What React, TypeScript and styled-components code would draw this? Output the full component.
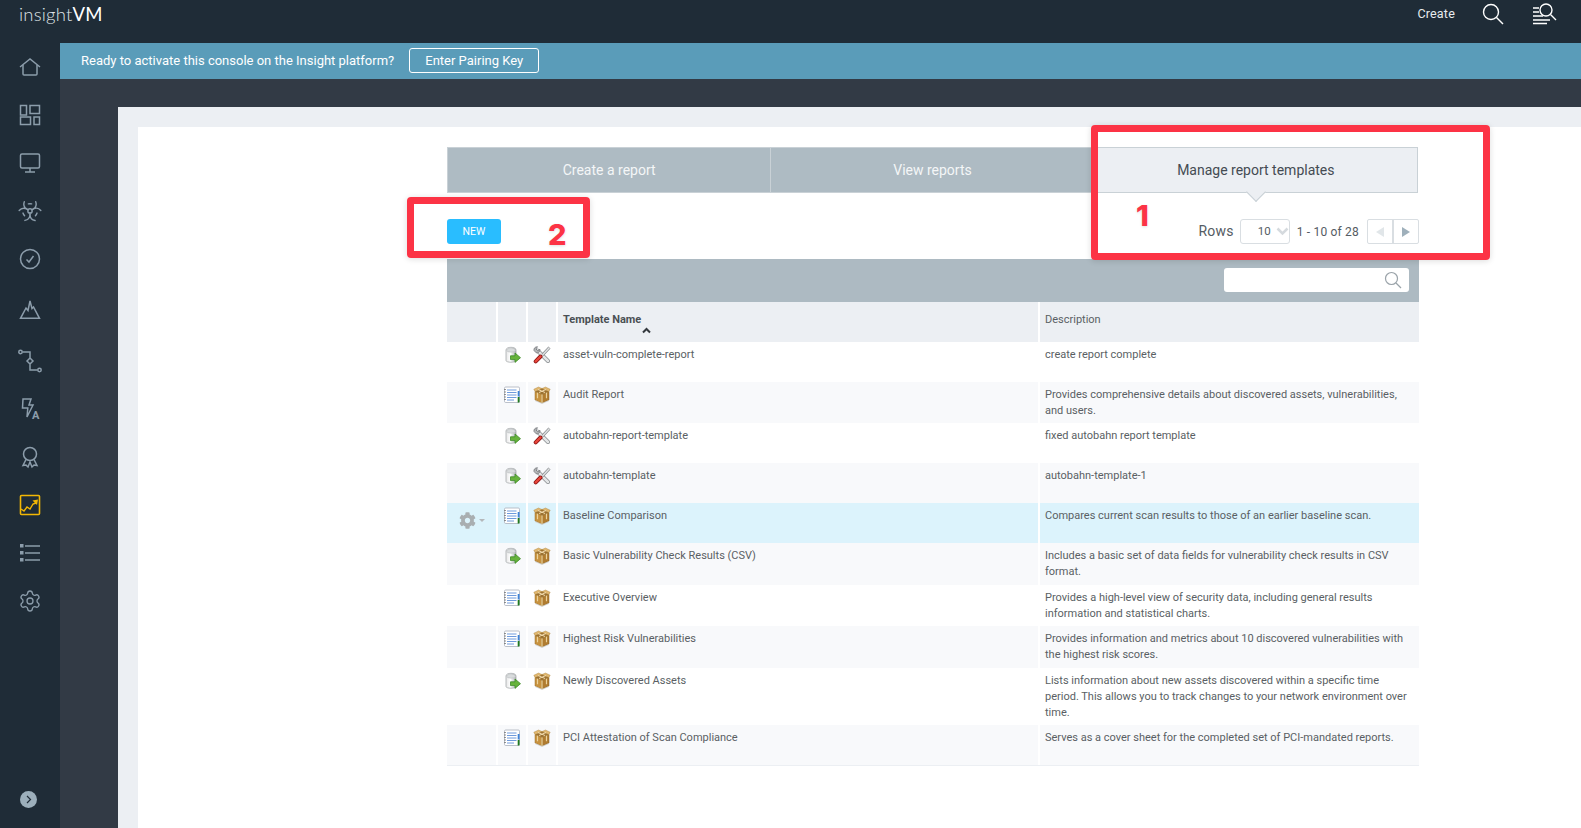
import styled, { createGlobalStyle } from 'styled-components';
import { Biohazard, Settings } from 'lucide-react';
import { FaCog } from 'react-icons/fa';

const GlobalStyle = createGlobalStyle`
	* { box-sizing: border-box; }
	html, body, #root { margin: 0; height: 100%; }
	body {
		font-family: Roboto, "Liberation Sans", sans-serif;
		overflow: hidden;
		background: #fff;
	}
`;

const Shell = styled.div`
	display: grid;
	grid-template-columns: 60px 1fr;
	grid-template-rows: 43px 1fr;
	height: 828px;
	background: #1f2c37;
`;
const TopBar = styled.header`
	grid-column: 1 / 3;
	display: flex;
	align-items: center;
	padding: 0 24px 16px 19px;
	color: #fff;
`;
const Logo = styled.div`
	font-family: Lato, sans-serif;
	font-size: 18.5px;
	font-weight: 300;
	color: #dfe4e8;
	letter-spacing: 0.2px;
	flex: 1;
	> b {
		font-weight: 400;
		color: #fff;
	}
`;
const TopAction = styled.span`
	font-size: 12.5px;
	letter-spacing: 0.2px;
	margin-right: 27px;
	color: #e8ecef;
`;
const TopIcon = styled.svg`
	display: block;
	color: #fff;
`;
const TopIconGap = styled.span`
	width: 28px;
`;
const SideNav = styled.nav`
	display: flex;
	flex-direction: column;
	color: #8c9dab;
`;
const NavItem = styled.a<{ $active?: boolean; $shift?: boolean }>`
	height: 48px;
	display: flex;
	align-items: center;
	justify-content: center;
	flex: none;
	color: ${(p) => (p.$active ? '#f2b705' : 'inherit')};
	margin-top: ${(p) => (p.$shift ? '6px' : '0')};
`;
const NavToggle = styled.button`
	margin: auto 0 20px 20px;
	width: 17px;
	height: 17px;
	border-radius: 50%;
	border: 0;
	padding: 0;
	background: #9cafbb;
	display: flex;
	align-items: center;
	justify-content: center;
	color: #1f2c37;
`;
const Main = styled.main`
	display: flex;
	flex-direction: column;
	background: #323a45;
	min-width: 0;
`;
const Banner = styled.div`
	height: 36px;
	flex: none;
	display: flex;
	align-items: center;
	gap: 15px;
	padding: 0 0 1px 21px;
	background: #5a9cb9;
	color: #fff;
	font-size: 13px;
`;
const PairingButton = styled.button`
	height: 25px;
	width: 130px;
	padding: 0;
	border: 1px solid #fff;
	border-radius: 3px;
	background: transparent;
	color: #fff;
	font: inherit;
`;
const Frame = styled.div`
	flex: 1;
	display: flex;
	margin: 28px 0 0 58px;
	padding: 20px 0 0 20px;
	background: #eceff3;
	min-height: 0;
`;
const Page = styled.div`
	flex: 1;
	background: #fff;
	padding: 20px 0 0 309px;
`;
const Board = styled.div`
	position: relative;
	width: 972px;
`;
const Tabs = styled.div`
	display: flex;
	width: 971px;
	height: 46px;
`;
const Tab = styled.div<{ $active?: boolean }>`
	flex: 1;
	position: relative;
	display: flex;
	align-items: center;
	justify-content: center;
	font-size: 14px;
	border: 1px solid #c9d1d6;
	border-left-width: 0;
	background: ${(p) => (p.$active ? '#eceff3' : '#aebbc3')};
	color: ${(p) => (p.$active ? '#444b52' : '#f4f6f7')};
	&:first-child {
		border-left-width: 1px;
	}
	${(p) =>
		p.$active &&
		`&::after {
		content: '';
		position: absolute;
		left: 50%;
		bottom: -7px;
		width: 13px;
		height: 13px;
		margin-left: -7px;
		background: #eceff3;
		border-right: 1px solid #c9d1d6;
		border-bottom: 1px solid #c9d1d6;
		transform: rotate(45deg);
		z-index: 1;
	}`}
`;
const Toolbar = styled.div`
	height: 66px;
	display: flex;
	align-items: flex-start;
	justify-content: space-between;
	padding-top: 26px;
`;
const NewButton = styled.button`
	width: 54px;
	height: 25px;
	border: 0;
	padding: 0;
	border-radius: 3px;
	background: #29bdff;
	color: #fff;
	font: 400 10.5px Roboto, sans-serif;
`;
const Paging = styled.div`
	display: flex;
	align-items: center;
	color: #555c63;
	font-size: 12px;
	letter-spacing: 0.2px;
`;
const RowsLabel = styled.span`
	font-size: 14px;
	margin: -2px 6px 0 0;
`;
const RowsSelect = styled.div`
	position: relative;
	width: 50px;
	height: 25px;
	border: 1px solid #d9dee2;
	border-radius: 3px;
	font-size: 11.5px;
	padding: 4px 0 0 17px;
	margin-right: 7px;
	> svg {
		position: absolute;
		right: 0;
		top: 7px;
	}
`;
const Pager = styled.div`
	display: flex;
	margin-left: 8px;
	border: 1px solid #d9dee2;
	border-radius: 2px;
	height: 25px;
	width: 52px;
`;
const PagerButton = styled.div<{ $next?: boolean }>`
	flex: 1;
	display: flex;
	align-items: center;
	justify-content: center;
	border-left: ${(p) => (p.$next ? '2px solid #d9dee2' : '0')};
	&::after {
		content: '';
		border-top: 5px solid transparent;
		border-bottom: 5px solid transparent;
		${(p) => (p.$next ? 'border-left: 8px solid #9fb0bb;' : 'border-right: 8px solid #e1e6e9;')}
	}
`;
const SearchBar = styled.div`
	height: 43px;
	background: #adbac2;
	display: flex;
	justify-content: flex-end;
	padding: 9px 10px 0 0;
`;
const SearchBox = styled.div`
	width: 185px;
	height: 24px;
	background: #fff;
	border-radius: 3px;
	display: flex;
	align-items: center;
	justify-content: flex-end;
	padding-right: 7px;
	color: #9aa3a9;
`;
const Table = styled.table`
	width: 972px;
	table-layout: fixed;
	border-collapse: separate;
	border-spacing: 0;
	font-size: 11px;
	line-height: 16px;
	color: #5a5f64;
	border-bottom: 1px solid #eceff3;
`;
const HeadCell = styled.th<{ $bold?: boolean }>`
	height: 40px;
	padding: 10px 5px 0;
	vertical-align: top;
	text-align: left;
	background: #eceff3;
	border-right: 2px solid #fff;
	font-weight: ${(p) => (p.$bold ? 700 : 400)};
	color: ${(p) => (p.$bold ? '#4a4f54' : '#5a5f64')};
	&:last-child {
		border-right: 0;
	}
`;
const SortMark = styled.svg`
	display: block;
	margin: -1px 0 0 79px;
`;
const Row = styled.tr<{ $tone: 'plain' | 'alt' | 'hot' }>`
	background: ${(p) => (p.$tone === 'hot' ? '#dcf3fc' : p.$tone === 'alt' ? '#f8f9fb' : '#fff')};
`;
const Cell = styled.td`
	height: 40px;
	padding: 5px 5px 4.4px;
	vertical-align: top;
	border-right: 2px solid #fff;
	&:last-child {
		border-right: 0;
	}
`;
const IconCell = styled.td`
	height: 40px;
	padding: 4px 0 0;
	vertical-align: top;
	border-right: 2px solid #fff;
	> svg {
		display: block;
		margin: 0 auto;
	}
`;
const GearWrap = styled.div`
	display: flex;
	align-items: center;
	padding: 5px 0 0 12px;
	color: #a9aeb1;
	&::after {
		content: '';
		margin-left: 3px;
		border-top: 3px solid #b4b8bb;
		border-left: 3px solid transparent;
		border-right: 3px solid transparent;
	}
`;
const Callout = styled.div<{ $left: number; $top: number; $w: number; $h: number }>`
	position: absolute;
	left: ${(p) => p.$left}px;
	top: ${(p) => p.$top}px;
	width: ${(p) => p.$w}px;
	height: ${(p) => p.$h}px;
	border: 7px solid #fc3345;
	border-radius: 4px;
	box-shadow: 0 1px 6px rgba(0, 0, 0, 0.14);
	z-index: 2;
`;
const CalloutNumber = styled.span<{ $left: number; $top: number }>`
	position: absolute;
	left: ${(p) => p.$left}px;
	top: ${(p) => p.$top}px;
	font: 800 29px/1 Inter, Roboto, sans-serif;
	color: #fc3345;
	text-shadow: 0 1px 3px rgba(0, 0, 0, 0.12);
`;

const NavSvg = ({ children }: { children: React.ReactNode }) => (
	<svg width="24" height="24" viewBox="0 0 24 24" fill="none" stroke="currentColor" strokeWidth="1.5">
		{children}
	</svg>
);

const ScanIcon = () => (
	<svg width="18" height="18" viewBox="0 0 18 18">
		<defs>
			<linearGradient id="can" x1="0" x2="1" y1="0" y2="0">
				<stop offset="0" stopColor="#e6e7e7" />
				<stop offset="0.45" stopColor="#fff" />
				<stop offset="1" stopColor="#a9adaf" />
			</linearGradient>
		</defs>
		<path d="M3 4c0-3.600 10-3.600 10 0v10.500c0 2.300-10 2.300-10 0z" fill="url(#can)" stroke="#a7abad" strokeWidth="0.8" />
		<ellipse cx="8" cy="4.200" rx="4.400" ry="2" fill="#d9dcdd" stroke="#b5b8ba" strokeWidth="0.5" />
		<path d="M7.500 9.800h4.500V7l5.500 4.700-5.500 4.700v-2.800H7.500z" fill="#67b33c" stroke="#3d8a28" strokeWidth="0.8" />
	</svg>
);
const ListIcon = () => (
	<svg width="18" height="18" viewBox="0 0 18 18">
		<rect x="1.500" y="1" width="15" height="15.500" rx="1.200" fill="#fff" stroke="#a9b0bb" strokeWidth="0.8" />
		<path d="M4 4h9.500M4 6.500h9.500M4 9h9.500M4 11.500h9.500M4 14h7" stroke="#5d8fd8" strokeWidth="0.9" />
		<path d="M1 3.500h2M1 6h2M1 8.500h2M1 11h2M1 13.500h2" stroke="#777" strokeWidth="0.8" />
		<rect x="14.700" y="5" width="1.800" height="5.500" fill="#3f83d8" />
		<rect x="14.700" y="11" width="1.800" height="5.500" fill="#1f7a1f" />
	</svg>
);
const ToolsIcon = () => (
	<svg width="18" height="18" viewBox="0 0 18 18">
		<path d="M4.500 4.500l10.500 10.500" stroke="#85898c" strokeWidth="4" strokeLinecap="round" />
		<path d="M4.500 4.500l10.500 10.500" stroke="#e4e6e7" strokeWidth="2.600" strokeLinecap="round" />
		<path d="M1 4.500c-.5-2 1-3.800 3.500-3.800L3 3l1.800 1.800L7 3.300c.2 2.500-1.800 4-3.800 3.500z" fill="#b4b7b9" stroke="#6b6f72" strokeWidth="0.7" />
		<path d="M16.500 1.500l-7 7.500" stroke="#85898c" strokeWidth="2.800" />
		<path d="M16.500 1.500l-7 7.500" stroke="#e0e2e3" strokeWidth="1.500" />
		<path d="M7.500 10.500l-4.800 4.800" stroke="#8a1414" strokeWidth="4" strokeLinecap="round" />
		<path d="M7.500 10.500l-4.800 4.800" stroke="#e8453a" strokeWidth="2.400" strokeLinecap="round" />
	</svg>
);
const BoxIcon = () => (
	<svg width="18" height="18" viewBox="0 0 18 18">
		<path d="M2 5.500l7 3V17l-7-3z" fill="#c7923f" stroke="#9a6f2b" strokeWidth="0.5" />
		<path d="M16 5.500l-7 3V17l7-3z" fill="#b07c30" stroke="#8a6225" strokeWidth="0.5" />
		<path d="M2 5.500l7-3 7 3-7 3z" fill="#9c7130" stroke="#a9803b" strokeWidth="0.5" />
		<path d="M2 5.500L.8 3.200 5.500 1 9 2.500zM16 5.500l1.200-2.300L12.500 1 9 2.500z" fill="#e0b76f" stroke="#a9803b" strokeWidth="0.4" />
		<path d="M4.500 6.700v5.600M13.500 6.700v5.600M9 8.500V17" stroke="#ecd29c" strokeWidth="1.200" />
		<path d="M5 3.500l7 3M13 3.500l-7 3" stroke="#f2dcae" strokeWidth="1" />
		<path d="M2 14.500l7 3 7-3" fill="none" stroke="#cfd0d0" strokeWidth="0.7" />
	</svg>
);

type TemplateRow = {
	name: string;
	description: string;
	kind: 'scan' | 'list';
	source: 'tools' | 'box';
	tone: 'plain' | 'alt' | 'hot';
};
const rows: TemplateRow[] = [
	{ name: 'asset-vuln-complete-report', description: 'create report complete', kind: 'scan', source: 'tools', tone: 'plain' },
	{ name: 'Audit Report', description: 'Provides comprehensive details about discovered assets, vulnerabilities, and users.', kind: 'list', source: 'box', tone: 'alt' },
	{ name: 'autobahn-report-template', description: 'fixed autobahn report template', kind: 'scan', source: 'tools', tone: 'plain' },
	{ name: 'autobahn-template', description: 'autobahn-template-1', kind: 'scan', source: 'tools', tone: 'alt' },
	{ name: 'Baseline Comparison', description: 'Compares current scan results to those of an earlier baseline scan.', kind: 'list', source: 'box', tone: 'hot' },
	{ name: 'Basic Vulnerability Check Results (CSV)', description: 'Includes a basic set of data fields for vulnerability check results in CSV format.', kind: 'scan', source: 'box', tone: 'alt' },
	{ name: 'Executive Overview', description: 'Provides a high-level view of security data, including general results information and statistical charts.', kind: 'list', source: 'box', tone: 'plain' },
	{ name: 'Highest Risk Vulnerabilities', description: 'Provides information and metrics about 10 discovered vulnerabilities with the highest risk scores.', kind: 'list', source: 'box', tone: 'alt' },
	{ name: 'Newly Discovered Assets', description: 'Lists information about new assets discovered within a specific time period. This allows you to track changes to your network environment over time.', kind: 'scan', source: 'box', tone: 'plain' },
	{ name: 'PCI Attestation of Scan Compliance', description: 'Serves as a cover sheet for the completed set of PCI-mandated reports.', kind: 'list', source: 'box', tone: 'alt' },
];

export default function App() {
	return (
		<Shell>
			<GlobalStyle />
			<TopBar>
				<Logo>
					insight<b>VM</b>
				</Logo>
				<TopAction>Create</TopAction>
				<TopIcon width="22" height="22" viewBox="0 0 22 22" fill="none" stroke="currentColor" strokeWidth="1.4">
					<circle cx="9" cy="9" r="7.500" />
					<path d="M14.500 14.500l6.500 6.500" />
				</TopIcon>
				<TopIconGap />
				<TopIcon width="25" height="22" viewBox="0 0 25 22" fill="none" stroke="currentColor" strokeWidth="1.400">
					<circle cx="14" cy="7" r="6" />
					<path d="M18.500 11.500l5.500 5.500M1 5h6M1 9h6M1 13h10M1 17h17M1 20.500h14" />
				</TopIcon>
			</TopBar>
			<SideNav>
				<NavItem>
					<NavSvg>
						<path d="M2 12l10-8 10 8" />
						<path d="M5 10v9a1 1 0 0 0 1 1h12a1 1 0 0 0 1-1v-9" />
					</NavSvg>
				</NavItem>
				<NavItem>
					<NavSvg>
						<rect x="2.500" y="2.500" width="6" height="9.500" />
						<rect x="12" y="2.500" width="9.500" height="8" />
						<rect x="2.500" y="14" width="10" height="7.500" />
						<rect x="16" y="14" width="5.500" height="7.500" />
					</NavSvg>
				</NavItem>
				<NavItem>
					<NavSvg>
						<rect x="2.500" y="3" width="19" height="14" rx="1.500" />
						<path d="M12 17v4M7 21h10" />
					</NavSvg>
				</NavItem>
				<NavItem>
					<Biohazard size={26} strokeWidth={1.300} />
				</NavItem>
				<NavItem>
					<NavSvg>
						<circle cx="12" cy="12" r="9.500" />
						<path d="M8.500 12.500l2.500 2.500 4.500-6" />
					</NavSvg>
				</NavItem>
				<NavItem>
					<NavSvg>
						<path d="M2.500 23.300H21.500L15.500 12 14 13.500 12 6l-2 9.500L8 13z" />
					</NavSvg>
				</NavItem>
				<NavItem $shift>
					<NavSvg>
						<circle cx="2.500" cy="3" r="1.700" />
						<circle cx="21.500" cy="21" r="1.700" />
						<path d="M9 12l3-3 3 3-3 3zM4.500 3h7.500v6M12 15v6h7.500" />
					</NavSvg>
				</NavItem>
				<NavItem>
					<NavSvg>
						<path d="M6 2h8l-2 6h4l-6 12 .8-9H5.500z" transform="translate(-1 0)" />
						<text x="14" y="22" fontFamily="Roboto, sans-serif" fontSize="11" fontWeight="700" fill="currentColor" stroke="none">
							A
						</text>
					</NavSvg>
				</NavItem>
				<NavItem>
					<NavSvg>
						<circle cx="12" cy="9" r="6.500" />
						<path d="M8 14.500l-3 6 3-.5 2 2 2-5 2 5 2-2 3 .5-3-6" />
					</NavSvg>
				</NavItem>
				<NavItem $active>
					<NavSvg>
						<rect x="2.500" y="2.500" width="19" height="19" rx="1" strokeWidth="1.600" />
						<path d="M3 16l3 2 3-4 3 2 3-5 3-1" strokeWidth="1.400" />
						<path d="M14.500 7.500l5.500-1-1 5.500z" fill="currentColor" stroke="none" />
					</NavSvg>
				</NavItem>
				<NavItem>
					<NavSvg>
						<path d="M7 5h15M7 12h15M7 19h15" strokeWidth="1.600" />
						<rect x="2" y="3" width="3.500" height="3.500" fill="currentColor" stroke="none" />
						<rect x="2" y="10" width="3.500" height="3.500" fill="currentColor" stroke="none" />
						<rect x="2" y="17" width="3.500" height="3.500" fill="currentColor" stroke="none" />
					</NavSvg>
				</NavItem>
				<NavItem>
					<Settings size={24} strokeWidth={1.300} />
				</NavItem>
				<NavToggle aria-label="expand">
					<svg width="9" height="9" viewBox="0 0 9 9" fill="none" stroke="currentColor" strokeWidth="1.200">
						<path d="M3 1l3.500 3.500L3 8" />
					</svg>
				</NavToggle>
			</SideNav>
			<Main>
				<Banner>
					<span>Ready to activate this console on the Insight platform?</span>
					<PairingButton>Enter Pairing Key</PairingButton>
				</Banner>
				<Frame>
					<Page>
						<Board>
							<Tabs>
								<Tab>Create a report</Tab>
								<Tab>View reports</Tab>
								<Tab $active>Manage report templates</Tab>
							</Tabs>
							<Toolbar>
								<NewButton>NEW</NewButton>
								<Paging>
									<RowsLabel>Rows</RowsLabel>
									<RowsSelect>
										10
										<svg width="13" height="9" viewBox="0 0 13 9" fill="none" stroke="#d5dade" strokeWidth="2.500">
											<path d="M1.500 1.500l5 5 5-5" />
										</svg>
									</RowsSelect>
									<span>1 - 10 of 28</span>
									<Pager>
										<PagerButton />
										<PagerButton $next />
									</Pager>
								</Paging>
							</Toolbar>
							<SearchBar>
								<SearchBox>
									<svg width="18" height="18" viewBox="0 0 18 18" fill="none" stroke="currentColor" strokeWidth="1.200">
										<circle cx="7.500" cy="7.500" r="6" />
										<path d="M12 12l5 5" />
									</svg>
								</SearchBox>
							</SearchBar>
							<Table>
								<colgroup>
									<col width="51" />
									<col width="30" />
									<col width="30" />
									<col width="482" />
									<col width="379" />
								</colgroup>
								<thead>
									<tr>
										<HeadCell />
										<HeadCell />
										<HeadCell />
										<HeadCell $bold>
											Template Name
											<SortMark width="9" height="7" viewBox="0 0 9 7" fill="none" stroke="#33383d" strokeWidth="2">
												<path d="M1 5.500l3.500-3.500 3.500 3.500" />
											</SortMark>
										</HeadCell>
										<HeadCell>Description</HeadCell>
									</tr>
								</thead>
								<tbody>
									{rows.map((row) => (
										<Row key={row.name} $tone={row.tone}>
											<IconCell>
												{row.tone === 'hot' && (
													<GearWrap>
														<FaCog size={17} />
													</GearWrap>
												)}
											</IconCell>
											<IconCell>{row.kind === 'scan' ? <ScanIcon /> : <ListIcon />}</IconCell>
											<IconCell>{row.source === 'tools' ? <ToolsIcon /> : <BoxIcon />}</IconCell>
											<Cell>{row.name}</Cell>
											<Cell>{row.description}</Cell>
										</Row>
									))}
								</tbody>
							</Table>
							<Callout $left={644} $top={-22} $w={399} $h={135}>
								<CalloutNumber $left={38} $top={69}>
									1
								</CalloutNumber>
							</Callout>
							<Callout $left={-40} $top={50} $w={183} $h={61}>
								<CalloutNumber $left={134} $top={16}>
									2
								</CalloutNumber>
							</Callout>
						</Board>
					</Page>
				</Frame>
			</Main>
		</Shell>
	);
}
